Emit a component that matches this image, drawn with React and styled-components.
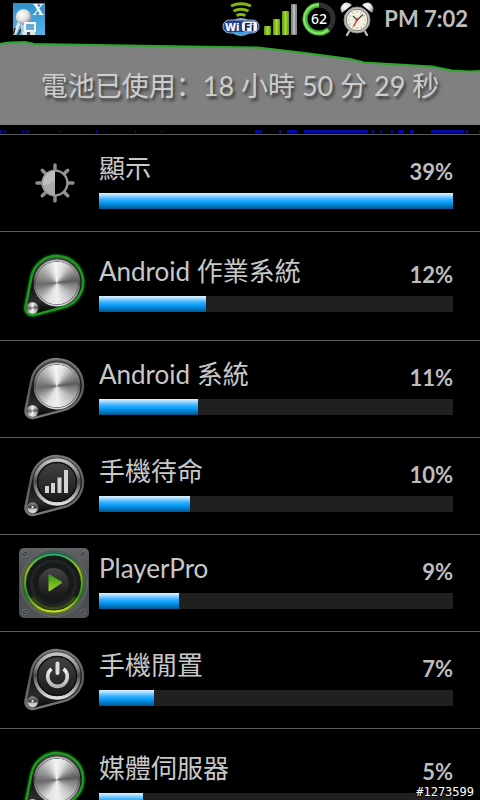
// src/App.jsx

import React from 'react';
import styled, { createGlobalStyle } from 'styled-components';

const GlobalStyle = createGlobalStyle`
    * {
        box-sizing: border-box;
    }

    body {
        margin: 0;
        background: #000000;
        color: #c8c8c8;
        font-family: Lato, "Noto Sans CJK TC", sans-serif;
    }
`;

const Root = styled.div`
    position: relative;
    height: 100vh;
    overflow: hidden;
    background: #000000;
`;

const StatusBar = styled.header`
    display: flex;
    align-items: center;
    justify-content: space-between;
    height: 38px;
    padding: 0 12px;
`;

const StatusGroup = styled.div`
    display: flex;
    align-items: center;
    gap: 4px;
`;

const Clock = styled.time`
    margin-left: 6px;
    color: #bdbdbd;
    font-size: 22px;
    font-weight: 700;
    line-height: 38px;
    white-space: nowrap;
`;

const Summary = styled.section`
    display: grid;
    height: 87px;

    > * {
        grid-area: 1 / 1;
    }
`;

const StretchedSvg = styled.svg`
    display: block;
    width: 100%;
    height: ${props => props.$height}px;
`;

const SummaryText = styled.h1`
    margin: 0;
    padding-top: 8px;
    align-self: center;
    text-align: center;
    color: #cdcdcd;
    font-family: Lato, "Noto Sans CJK SC", sans-serif;
    font-size: 27px;
    font-weight: 400;
    line-height: 32px;
    white-space: nowrap;
    text-shadow: 2px 3px 3px #383838;
`;

const Activity = styled.div`
    padding-top: 5px;
    padding-bottom: 1px;
`;

const UsageList = styled.ul`
    margin: 0;
    padding: 0;
    list-style: none;
`;

const UsageRow = styled.li`
    display: grid;
    grid-template-columns: 72px 1fr;
    align-items: center;
    gap: 9px;
    padding: ${props => (props.$tall ? 18 : 12)}px 27px ${props => (props.$tall ? 18 : 12)}px 18px;
    border-top: 1px solid #5a5a5a;
`;

const UsageBody = styled.div`
    padding-bottom: 3px;
`;

const UsageHeading = styled.div`
    display: flex;
    align-items: flex-start;
    justify-content: space-between;
    height: 39px;
`;

const UsageName = styled.label`
    font-size: 26px;
    line-height: 28px;
    white-space: nowrap;
`;

const UsagePercent = styled.span`
    color: #bdbdbd;
    font-size: 22px;
    font-weight: 700;
    line-height: 36px;
`;

const UsageBar = styled.progress`
    display: block;
    width: 100%;
    height: 16px;
    border: 0;
    appearance: none;
    background: #202020;

    &::-webkit-progress-bar {
        background: #202020;
    }

    &::-webkit-progress-value {
        background: linear-gradient(#e4f5ff 0%, #8bd2ff 20%, #2faeff 42%, #0598f4 62%, #0078c2 80%, #00558a 100%);
    }
`;

const Serial = styled.small`
    position: absolute;
    right: 6px;
    bottom: 0;
    color: #ffffff;
    font-family: "DejaVu Sans Mono", monospace;
    font-size: 12px;
    line-height: 16px;
    text-shadow: 1px 0 #000000, -1px 0 #000000, 0 1px #000000, 0 -1px #000000;
`;

const BELT = 'M13.5 27A26 26 0 1 1 45.6 57.2L16.3 64.8A7 7 0 0 1 7.6 56.6Z';

// grey level of brushed metal around the knob, [degrees, level]
const METAL = [
    [0, 120], [40, 190], [85, 240], [115, 225], [150, 150],
    [172, 105], [215, 165], [262, 245], [290, 220],
    [325, 140], [350, 90], [360, 120],
];

const metalAt = (deg) => {
    const i = METAL.findIndex(stop => stop[0] > deg);
    const [d0, v0] = METAL[i - 1];
    const [d1, v1] = METAL[i];
    return Math.round(v0 + (v1 - v0) * (deg - d0) / (d1 - d0));
};

const point = (cx, cy, r, deg) => {
    const a = deg * Math.PI / 180;
    return (cx + r * Math.cos(a)).toFixed(2) + ' ' + (cy + r * Math.sin(a)).toFixed(2);
};

// every slice runs well under the next one, so no seam shows between them
const BrushedDisc = ({ cx, cy, r }) => (
    <g>
        <circle cx={cx} cy={cy} r={r} fill="#aaaaaa"/>
        {Array.from({ length: 60 }, (_, i) => {
            const deg = i * 6;
            const v = metalAt(deg);
            const end = Math.min(deg + 24, 360);
            return (
                <path
                    key={deg}
                    fill={`rgb(${v},${v},${v})`}
                    d={`M${cx} ${cy}L${point(cx, cy, r, deg)}A${r} ${r} 0 0 1 ${point(cx, cy, r, end)}Z`}/>
            );
        })}
    </g>
);

const Defs = () => (
    <svg width="0" height="0" style={{ position: 'absolute' }} aria-hidden="true">
        <defs>
            <linearGradient id="ring" x1="0" y1="0" x2="0" y2="1">
                <stop offset="0" stopColor="#c4c4c4"/>
                <stop offset="0.3" stopColor="#8a8a8a"/>
                <stop offset="0.48" stopColor="#4a4a4a"/>
                <stop offset="0.7" stopColor="#8c8c8c"/>
                <stop offset="1" stopColor="#e0e0e0"/>
            </linearGradient>
            <linearGradient id="belt" x1="0" y1="0" x2="0" y2="1">
                <stop offset="0" stopColor="#7a7a7a"/>
                <stop offset="0.45" stopColor="#585858"/>
                <stop offset="1" stopColor="#787878"/>
            </linearGradient>
            <linearGradient id="housing" x1="0" y1="0" x2="0" y2="1">
                <stop offset="0" stopColor="#4a4a4a"/>
                <stop offset="0.5" stopColor="#101010"/>
                <stop offset="0.75" stopColor="#2c2c2c"/>
                <stop offset="1" stopColor="#000000"/>
            </linearGradient>
            <linearGradient id="face" x1="0" y1="0" x2="0" y2="1">
                <stop offset="0" stopColor="#444444"/>
                <stop offset="1" stopColor="#171717"/>
            </linearGradient>
            <linearGradient id="bead" x1="0" y1="0" x2="0" y2="1">
                <stop offset="0" stopColor="#8a8a8a"/>
                <stop offset="0.45" stopColor="#3c3c3c"/>
                <stop offset="0.6" stopColor="#bbbbbb"/>
                <stop offset="1" stopColor="#efefef"/>
            </linearGradient>
            <linearGradient id="glyph" x1="0" y1="0" x2="0" y2="1">
                <stop offset="0" stopColor="#f0f0f0"/>
                <stop offset="1" stopColor="#b4b4b4"/>
            </linearGradient>
            <linearGradient id="plate" x1="0" y1="0" x2="0" y2="1">
                <stop offset="0" stopColor="#606366"/>
                <stop offset="0.5" stopColor="#45484a"/>
                <stop offset="1" stopColor="#505355"/>
            </linearGradient>
            <linearGradient id="neon" x1="0" y1="0" x2="0" y2="1">
                <stop offset="0" stopColor="#20b070"/>
                <stop offset="0.25" stopColor="#9cc420"/>
                <stop offset="0.5" stopColor="#58a81c"/>
                <stop offset="0.72" stopColor="#2e9a24"/>
                <stop offset="1" stopColor="#c8e820"/>
            </linearGradient>
            <linearGradient id="play" x1="0" y1="0" x2="0" y2="1">
                <stop offset="0" stopColor="#2a9a18"/>
                <stop offset="1" stopColor="#a4d020"/>
            </linearGradient>
            <linearGradient id="sky" x1="0" y1="0" x2="0" y2="1">
                <stop offset="0" stopColor="#2f8fc8"/>
                <stop offset="1" stopColor="#58b4e4"/>
            </linearGradient>
            <linearGradient id="badge" x1="0" y1="0" x2="0" y2="1">
                <stop offset="0" stopColor="#7898d8"/>
                <stop offset="0.5" stopColor="#1c3a8c"/>
                <stop offset="1" stopColor="#3aa0e0"/>
            </linearGradient>
            <linearGradient id="lime" x1="0" y1="0" x2="1" y2="0">
                <stop offset="0" stopColor="#5c9410"/>
                <stop offset="0.5" stopColor="#a4dc30"/>
                <stop offset="1" stopColor="#609810"/>
            </linearGradient>
            <radialGradient id="ball" cx="0.4" cy="0.35" r="0.65">
                <stop offset="0" stopColor="#ffffff"/>
                <stop offset="0.6" stopColor="#dedede"/>
                <stop offset="1" stopColor="#8c9298"/>
            </radialGradient>
            <filter id="glow" x="-20%" y="-20%" width="140%" height="140%">
                <feGaussianBlur stdDeviation="1"/>
            </filter>
        </defs>
    </svg>
);

const Icon = ({ children }) => (
    <svg width="72" height="72" viewBox="0 0 72 72" aria-hidden="true">
        {children}
    </svg>
);

const DisplayIcon = () => (
    <Icon>
        <g stroke="#8e8e8e" strokeWidth="3.4" strokeLinecap="round">
            {[0, 45, 90, 135, 180, 225, 270, 315].map(deg => (
                <line key={deg} x1="37" y1="23" x2="37" y2="18" transform={`rotate(${deg} 37 36)`}/>
            ))}
        </g>
        <circle cx="37" cy="36" r="12.4" fill="#000000" stroke="#969696" strokeWidth="2.4"/>
        <path d="M37 24A12 12 0 0 0 37 48Z" fill="#aaaaaa"/>
        <path d="M37 24A12 12 0 0 0 25 38Q33 38 37 32Z" fill="#bcbcbc"/>
    </Icon>
);

const MetalIcon = ({ lit }) => (
    <Icon>
        {lit && <path d={BELT} fill="none" stroke="#107810" strokeWidth="3.4" filter="url(#glow)"/>}
        <path d={BELT} fill="url(#housing)" stroke={lit ? '#1c9c1c' : 'url(#belt)'} strokeWidth="2.4"/>
        <circle cx="39" cy="33" r="23.5" fill="url(#ring)"/>
        <circle cx="39" cy="33" r="21.8" fill="#606060"/>
        <BrushedDisc cx={39} cy={33} r={21}/>
        <circle cx="14.5" cy="58" r="6" fill="url(#ring)"/>
        <BrushedDisc cx={14.5} cy={58} r={4.6}/>
    </Icon>
);

const DialIcon = ({ children }) => (
    <Icon>
        <path d={BELT} fill="url(#housing)" stroke="url(#belt)" strokeWidth="2.4"/>
        <circle cx="39" cy="32" r="22" fill="url(#face)" stroke="url(#ring)" strokeWidth="3.4"/>
        <circle cx="39" cy="32" r="19.4" fill="none" stroke="#101010" strokeWidth="1.4"/>
        {children}
        <circle cx="14.5" cy="58" r="5.4" fill="url(#bead)" stroke="#777777"/>
        <circle cx="14.5" cy="57" r="1" fill="#ffffff"/>
    </Icon>
);

const SignalIcon = () => (
    <DialIcon>
        <g fill="#d4d4d4">
            <rect x="27" y="36" width="4" height="7"/>
            <rect x="33" y="33" width="4" height="10"/>
            <rect x="39.5" y="27.5" width="4" height="15.5"/>
            <rect x="46" y="20" width="4" height="23"/>
        </g>
    </DialIcon>
);

const PowerIcon = () => (
    <DialIcon>
        <path d="M33.5 24.8A9.8 9.8 0 1 0 45.5 24.8" fill="none" stroke="url(#glyph)" strokeWidth="3.6"/>
        <path d="M39.5 19.5V29" stroke="#dcdcdc" strokeWidth="4" strokeLinecap="round"/>
    </DialIcon>
);

const PlayerIcon = () => (
    <Icon>
        <rect x="1" y="1" width="70" height="70" rx="5" fill="url(#plate)"/>
        <circle cx="36" cy="36" r="33.6" fill="#505355" stroke="#686b6e"/>
        <circle cx="35.5" cy="36" r="30.5" fill="#121414"/>
        <circle cx="35.5" cy="36" r="28.6" fill="none" stroke="url(#neon)" strokeWidth="3" filter="url(#glow)"/>
        <circle cx="35.5" cy="36" r="28.4" fill="#181a1a" stroke="url(#neon)" strokeWidth="1.8"/>
        <path d="M14 50A26 26 0 0 0 57 50" fill="none" stroke="#78a818" strokeWidth="2" opacity="0.6" filter="url(#glow)"/>
        <circle cx="35.5" cy="36" r="22" fill="none" stroke="#222525" strokeWidth="3"/>
        <circle cx="35.5" cy="36" r="15" fill="url(#face)"/>
        <path d="M31 27.5L44 35.5L31 44Z" fill="url(#play)" stroke="url(#play)" strokeLinejoin="round"/>
        {[[7, 7], [64.5, 7], [7, 65], [64.5, 65]].map(([x, y]) => (
            <g key={x + '-' + y}>
                <circle cx={x} cy={y} r="2.6" fill="#34373a" stroke="#75787b" strokeWidth="0.8"/>
                <path d={`M${x - 1.5} ${y - 1.5}l3 3`} stroke="#8c8f92"/>
            </g>
        ))}
    </Icon>
);

const AppBadge = () => (
    <svg width="34" height="34" viewBox="0 0 34 34" role="img" aria-label="X">
        <rect x="1" y="1" width="32" height="32" fill="url(#sky)"/>
        <path d="M7 21L3 31" stroke="#e4ecf0" strokeWidth="3" strokeLinecap="round"/>
        <path d="M3 26L1.5 32M9 27L6 33" stroke="#28343c" strokeWidth="1.6"/>
        <path d="M8 20H15L14 33H10Z" fill="#c4ced4"/>
        <circle cx="11.5" cy="15" r="7.8" fill="url(#ball)"/>
        <path d="M12 20H24V30H12Z" fill="#f0f6fa"/>
        <rect x="14" y="22" width="8" height="6" fill="#6cacd4"/>
        <path d="M11 30H15V33H11ZM18 29H23V33H18Z" fill="#dce4e8"/>
        <path d="M15 30H18V33H15Z" fill="#384850"/>
        <text x="26" y="13" textAnchor="middle" fill="#ffffff" fontFamily="Liberation Serif, serif" fontSize="16" fontWeight="700">X</text>
    </svg>
);

const WifiIcon = () => (
    <svg width="38" height="34" viewBox="0 0 38 34" role="img" aria-label="WiFi">
        <g fill="none" stroke="#84b414" strokeWidth="3">
            <path d="M9 4Q19 -0.5 29 4"/>
            <path d="M11.5 9Q19 5.5 26.5 9"/>
            <path d="M14.5 13.4Q19 11.4 23.5 13.4"/>
        </g>
        <ellipse cx="19" cy="25" rx="11" ry="8.4" fill="url(#badge)" stroke="#9cb8d8"/>
        <rect x="1" y="18" width="36" height="13" rx="6.5" fill="#24428c" stroke="#9cb0d4"/>
        <path d="M9 30Q19 34 29 30Z" fill="#3aa0e0"/>
        <rect x="20" y="19.5" width="15" height="10" rx="3" fill="#f4f6fa"/>
        <text x="3" y="28.5" fill="#ffffff" fontFamily="DejaVu Sans, sans-serif" fontSize="10" fontWeight="700">Wi</text>
        <text x="22" y="28.5" fill="#14245c" fontFamily="DejaVu Sans, sans-serif" fontSize="10" fontWeight="700">Fi</text>
    </svg>
);

const ReceptionIcon = () => (
    <svg width="34" height="34" viewBox="0 0 34 34" aria-hidden="true">
        <rect x="0" y="24" width="7" height="9" rx="1" fill="url(#lime)"/>
        <rect x="9" y="17" width="7" height="16" rx="1" fill="url(#lime)"/>
        <rect x="18" y="9" width="7" height="24" rx="1" fill="url(#lime)"/>
        <rect x="27" y="2" width="6" height="31" rx="1" fill="#8a8a8a"/>
        <rect x="29" y="3" width="2" height="29" fill="#bababa"/>
    </svg>
);

const BatteryIcon = () => (
    <svg width="34" height="34" viewBox="0 0 34 34" role="img" aria-label="62">
        <circle cx="17" cy="17" r="14" fill="none" stroke="#303030" strokeWidth="5"/>
        <path d="M17 3A14 14 0 1 0 26.5 27.3" fill="none" stroke="#48b830" strokeWidth="5"/>
        <path d="M17 2.6A14.4 14.4 0 1 0 26 28" fill="none" stroke="#8ce870" strokeWidth="1.8"/>
        <text x="17" y="22" textAnchor="middle" fill="#ffffff" fontFamily="Noto Sans, sans-serif" fontSize="14" fontWeight="500">62</text>
    </svg>
);

const AlarmIcon = () => (
    <svg width="34" height="34" viewBox="0 0 34 34" aria-hidden="true">
        <path d="M10 28L7 33M24 28L27 33" stroke="#b8b8b8" strokeWidth="2.4" strokeLinecap="round"/>
        <path d="M9 8L12 11M25 8L22 11" stroke="#9a9a9a" strokeWidth="2"/>
        <path d="M2 11A6 6 0 0 1 12 3Z" fill="url(#ball)"/>
        <path d="M32 11A6 6 0 0 0 22 3Z" fill="url(#ball)"/>
        <circle cx="17" cy="18" r="13" fill="#c4c4c4" stroke="#8c8c8c"/>
        <circle cx="17" cy="18" r="10.8" fill="#f2eee0" stroke="#77756e"/>
        {[0, 30, 60, 90, 120, 150, 180, 210, 240, 270, 300, 330].map(deg => (
            <path key={deg} d="M17 9V10.4" stroke="#8c8a80" strokeWidth="0.8" transform={`rotate(${deg} 17 18)`}/>
        ))}
        <path d="M17 18L13 14M17 18L23 12.5" stroke="#404040" strokeWidth="1.2"/>
        <path d="M18 16L13.5 24.5" stroke="#d83020" strokeWidth="1.4"/>
        <circle cx="17" cy="18" r="1.2" fill="#c03020"/>
    </svg>
);

const BatteryChart = () => (
    <StretchedSvg $height={87} viewBox="0 0 480 87" preserveAspectRatio="none" aria-hidden="true">
        <path
            fill="#808080"
            d="M0 87V6Q10 4 25 4Q30 5 34 6L220 9L258 9.5L305 15L350 21L364 24.5L432 28.5L452 32.5L470 33.5L480 33V87Z"/>
        <path
            fill="none"
            stroke="#2aa82a"
            strokeWidth="2"
            d="M0 6Q10 4 25 4Q30 5 34 6L220 9L258 9.5L305 15L350 21L364 24.5L432 28.5L452 32.5L470 33.5L480 33"/>
    </StretchedSvg>
);

// [start, width] of each awake period
const AWAKE = [
    [0, 2], [4, 1], [22, 1], [26, 2], [29, 1], [59, 1], [96, 1], [135, 1], [161, 1],
    [255, 4], [260, 2], [279, 2], [287, 10], [304, 64], [372, 2], [380, 1],
    [391, 2], [398, 6], [410, 4], [431, 33], [466, 2], [479, 1],
];

const AwakeStrip = () => (
    <StretchedSvg $height={3} viewBox="0 0 480 3" preserveAspectRatio="none" aria-hidden="true">
        {AWAKE.map(([x, width]) => (
            <rect key={x} x={x} y="0" width={width} height="3" fill="#0808a8"/>
        ))}
    </StretchedSvg>
);

const USAGE = [
    { id: 'display', name: '顯示', percent: 39, level: 354, icon: <DisplayIcon/> },
    { id: 'os', name: 'Android 作業系統', percent: 12, level: 107, icon: <MetalIcon lit/>, tall: true },
    { id: 'system', name: 'Android 系統', percent: 11, level: 99, icon: <MetalIcon/> },
    { id: 'standby', name: '手機待命', percent: 10, level: 91, icon: <SignalIcon/> },
    { id: 'player', name: 'PlayerPro', percent: 9, level: 80, icon: <PlayerIcon/> },
    { id: 'idle', name: '手機閒置', percent: 7, level: 55, icon: <PowerIcon/> },
    { id: 'media', name: '媒體伺服器', percent: 5, level: 44, icon: <MetalIcon lit/>, tall: true },
];

const App = () => (
    <Root>
        <GlobalStyle/>
        <Defs/>

        {/* Status bar */}
        <StatusBar>
            <AppBadge/>
            <StatusGroup>
                <WifiIcon/>
                <ReceptionIcon/>
                <BatteryIcon/>
                <AlarmIcon/>
                <Clock>PM 7:02</Clock>
            </StatusGroup>
        </StatusBar>

        {/* Battery history */}
        <Summary>
            <BatteryChart/>
            <SummaryText>電池已使用：18 小時 50 分 29 秒</SummaryText>
        </Summary>
        <Activity>
            <AwakeStrip/>
        </Activity>

        {/* Usage */}
        <UsageList>
            {USAGE.map(item => (
                <UsageRow key={item.id} $tall={item.tall}>
                    {item.icon}
                    <UsageBody>
                        <UsageHeading>
                            <UsageName htmlFor={item.id}>{item.name}</UsageName>
                            <UsagePercent>{item.percent}%</UsagePercent>
                        </UsageHeading>
                        <UsageBar id={item.id} max={354} value={item.level}/>
                    </UsageBody>
                </UsageRow>
            ))}
        </UsageList>

        <Serial>#1273599</Serial>
    </Root>
);

export default App;
